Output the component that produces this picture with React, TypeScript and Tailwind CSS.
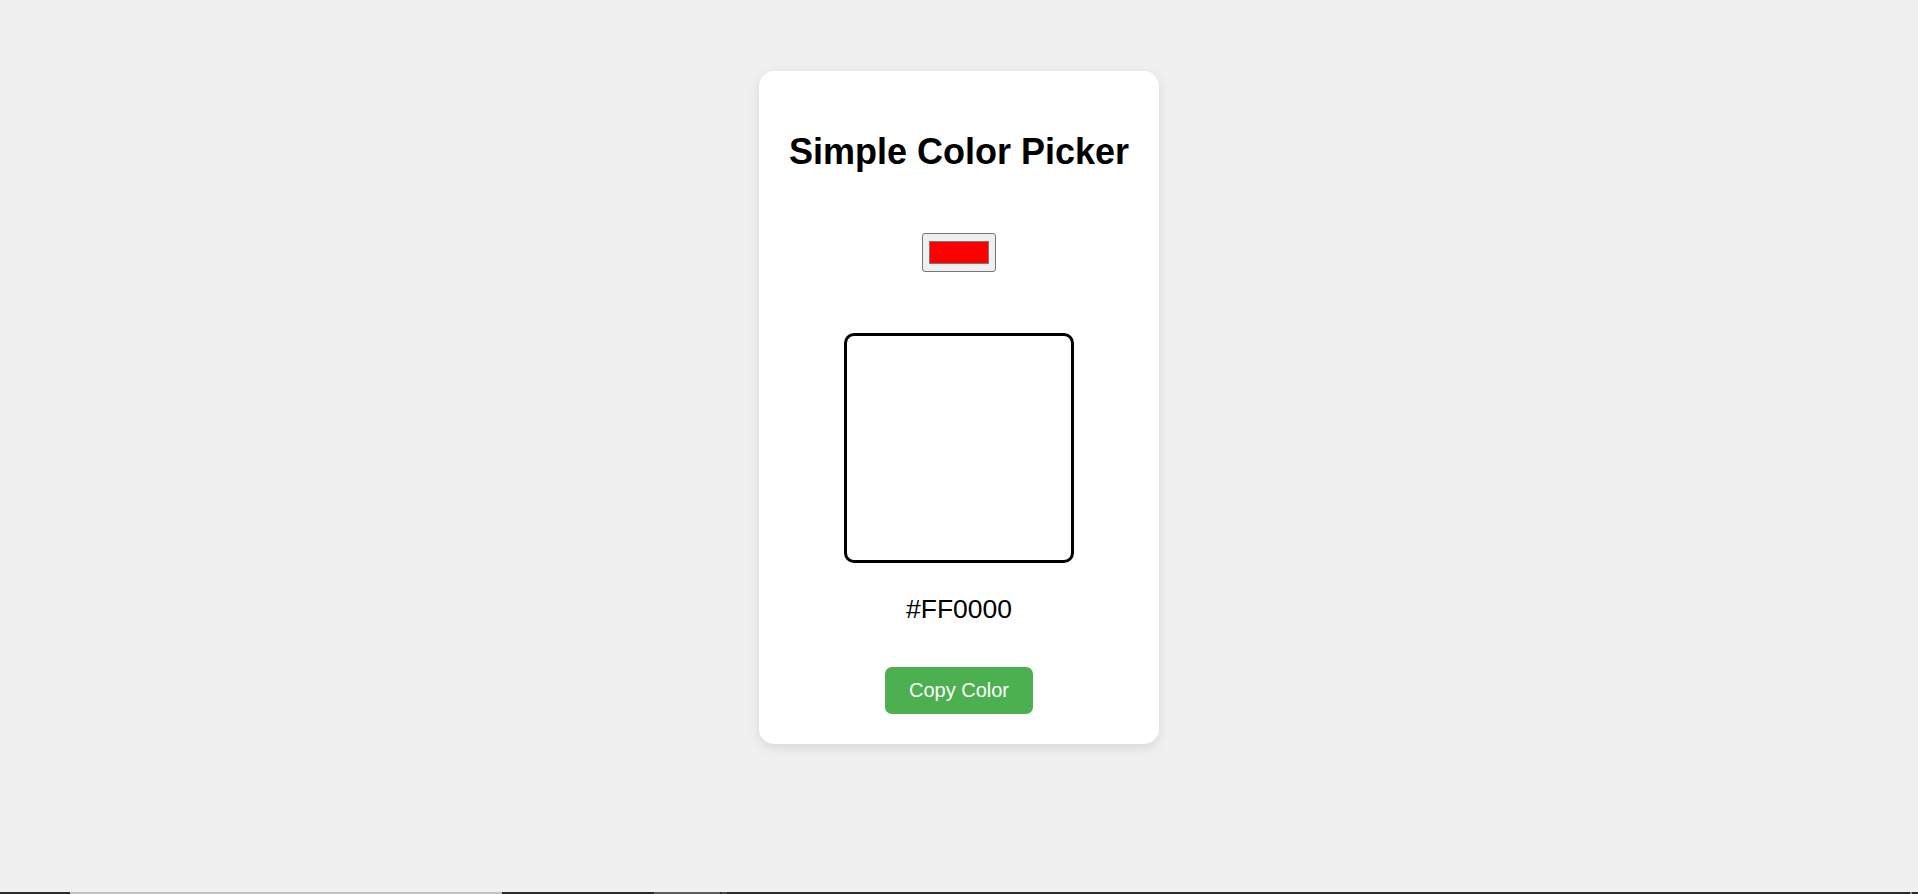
import React from 'react'

const taskbar = [
  { w: 'w-[70px]', c: 'bg-[#2b2b2b]' },
  { w: 'w-[432px]', c: 'bg-[#c2c2c2]' },
  { w: 'w-[152px]', c: 'bg-[#2b2b2b]' },
  { w: 'w-[66px]', c: 'bg-[#5c5c5c]' },
  { w: 'w-[2px]', c: 'bg-[#2b2b2b]' },
  { w: 'w-[5px]', c: 'bg-[#4a4a4a]' },
  { w: 'w-[1183px]', c: 'bg-[#2b2b2b]' },
  { w: 'w-[2px]', c: 'bg-[#8a8a8a]' },
  { w: 'flex-1', c: 'bg-[#2b2b2b]' },
]

const App = () => {
  const color = '#FF0000'

  return (
    <div className="h-screen flex flex-col bg-[#f0f0f0] font-['Liberation_Sans',Arial,sans-serif] text-black">
      <main className="flex-1 pt-[71px]">
        <div className="mx-auto w-[400px] bg-white rounded-[15px] shadow-[0_4px_12px_rgba(0,0,0,0.1)] pt-[60px] pb-[30px] flex flex-col items-center">
          <h1 className="text-[36px] leading-[42px] font-bold">Simple Color Picker</h1>

          <div className="mt-[60px] w-[74px] h-[39px] bg-[#efefef] border border-[#767676] rounded-[3px] flex items-center justify-center">
            <div className="w-[60px] h-[23px] bg-[#ff0000] border border-[#777]" />
          </div>

          <div className="mt-[61px] w-[230px] h-[230px] border-[3px] border-black rounded-[10px] bg-white" />

          <p className="mt-[31px] text-[26.5px] leading-[30px]">{color}</p>

          <button className="mt-[43px] px-6 py-3 bg-[#4caf50] text-white text-[20px] leading-[23px] rounded-[7px]">
            Copy Color
          </button>
        </div>
      </main>
      <div className="h-[2px] flex">
        {taskbar.map((s, i) => (
          <div key={`seg${i}`} className={`${s.w} ${s.c}`} />
        ))}
      </div>
    </div>
  )
}

export default App
